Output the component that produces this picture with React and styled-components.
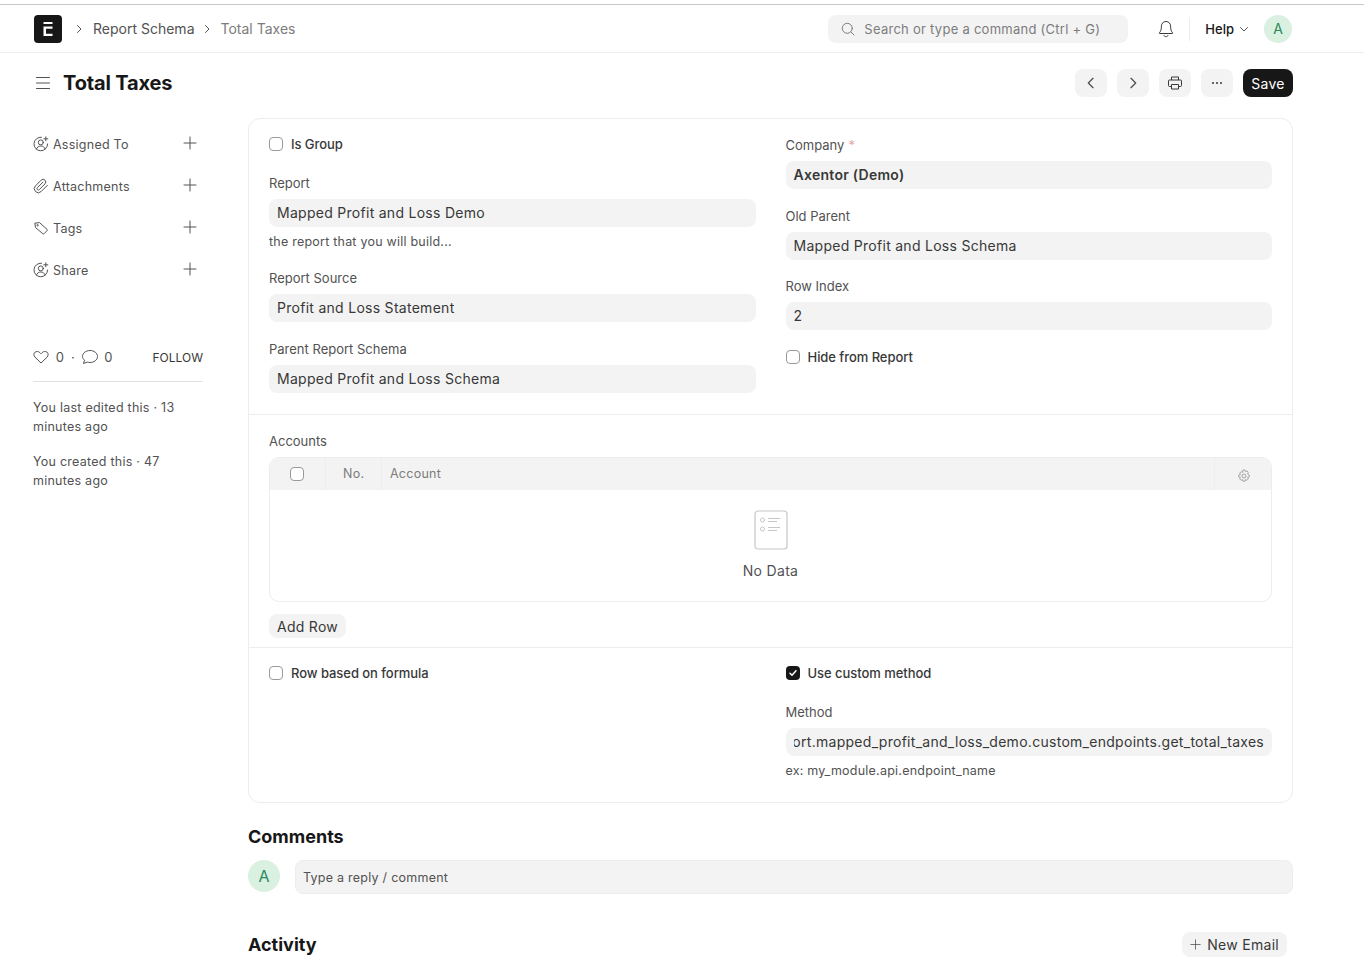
import React from "react";
import styled, { createGlobalStyle } from "styled-components";

const GlobalStyle = createGlobalStyle`
  html, body {
    margin: 0;
    padding: 0;
    background: #fff;
    font-family: Inter, "Liberation Sans", sans-serif;
    color: #383838;
    letter-spacing: 0.02em;
  }
  * { box-sizing: border-box; }
`;

const Navbar = styled.header`
  margin-top: 4px;
  height: 49px;
  border-top: 1px solid #c8c8c8;
  border-bottom: 1px solid #ededed;
  display: flex;
  align-items: center;
  padding: 0 72px 0 34px;
`;

const Logo = styled.div`
  width: 28px;
  height: 28px;
  border-radius: 4px;
  background: #171717;
  display: flex;
  align-items: center;
  justify-content: center;
`;

const Crumbs = styled.nav`
  display: flex;
  align-items: center;
  margin-left: 11px;
  font-size: 14px;
  letter-spacing: 0;
  flex: 1;
`;

const Crumb = styled.span`
  color: ${(p) => (p.$current ? "#7c7c7c" : "#525252")};
  margin: 0 6px 0 8px;
`;

const SearchBox = styled.div`
  width: 300px;
  height: 28px;
  border-radius: 8px;
  background: #f3f3f3;
  display: flex;
  align-items: center;
  gap: 9px;
  padding-left: 13px;
  font-size: 13px;
  color: #7c7c7c;
  letter-spacing: 0.02em;
`;

const BellWrap = styled.div`
  margin-left: 30px;
  display: flex;
`;

const NavDivider = styled.div`
  width: 1px;
  height: 24px;
  background: #ededed;
  margin: 0 15px;
`;

const HelpLink = styled.div`
  display: flex;
  align-items: center;
  gap: 4px;
  font-size: 13px;
  font-weight: 500;
  color: #171717;
  letter-spacing: 0;
  margin-right: 14px;
`;

const Avatar = styled.div`
  width: ${(p) => p.$size}px;
  height: ${(p) => p.$size}px;
  border-radius: 50%;
  background: #daf0e1;
  color: #2b8a5c;
  display: flex;
  align-items: center;
  justify-content: center;
  font-size: ${(p) => (p.$size > 30 ? 16 : 14)}px;
  font-weight: 400;
  flex-shrink: 0;
  letter-spacing: 0;
`;

const PageHead = styled.div`
  height: 65px;
  display: flex;
  align-items: center;
  padding: 0 71px 5px 36px;
`;

const Title = styled.h1`
  margin: 0 0 0 13px;
  font-size: 20px;
  font-weight: 700;
  color: #171717;
  flex: 1;
  letter-spacing: -0.008em;
`;

const IconButton = styled.button`
  width: 32px;
  height: 28px;
  border: 0;
  padding: 0;
  border-radius: 8px;
  background: #f3f3f3;
  display: flex;
  align-items: center;
  justify-content: center;
  margin-left: ${(p) => p.$gap}px;
  color: #525252;
`;

const SaveButton = styled.button`
  height: 28px;
  width: 50px;
  border: 0;
  padding: 0;
  margin-left: 10px;
  border-radius: 8px;
  background: #171717;
  color: #fff;
  font-family: inherit;
  font-size: 14px;
  letter-spacing: 0.02em;
`;

const Layout = styled.div`
  display: flex;
  padding: 0 71px 0 33px;
`;

const Sidebar = styled.aside`
  width: 170px;
  margin-right: 45px;
  flex-shrink: 0;
  padding-top: 5px;
`;

const SideItem = styled.div`
  height: 42px;
  display: flex;
  align-items: center;
  font-size: 12.5px;
  color: #525252;
  letter-spacing: 0.02em;
`;

const SideLabel = styled.span`
  margin-left: 4px;
  flex: 1;
`;

const PlusWrap = styled.span`
  display: flex;
  margin-right: 6px;
  margin-top: -3px;
`;

const Stats = styled.div`
  margin-top: 54px;
  height: 37px;
  display: flex;
  align-items: center;
  border-bottom: 1px solid #e2e2e2;
  padding-bottom: 12px;
  font-size: 13px;
  color: #525252;
  gap: 6.7px;
`;

const Follow = styled.span`
  margin-left: auto;
  font-size: 12px;
  color: #383838;
  letter-spacing: 0;
`;

const Meta = styled.p`
  margin: 16px 0 0;
  font-size: 12.5px;
  line-height: 19px;
  color: #525252;
  width: 150px;
  letter-spacing: 0.02em;
`;

const Main = styled.main`
  flex: 1;
  min-width: 0;
`;

const FormCard = styled.div`
  border: 1px solid #ededed;
  border-radius: 12px;
`;

const Section = styled.section`
  padding: ${(p) => p.$padding};
  border-top: ${(p) => (p.$first ? "0" : "1px solid #ededed")};
`;

const Columns = styled.div`
  display: grid;
  grid-template-columns: minmax(0, 1fr) minmax(0, 1fr);
  column-gap: 30px;
`;

const Column = styled.div`
  min-width: 0;
  padding-top: ${(p) => p.$top || 0}px;
`;

const Check = styled.label`
  display: flex;
  align-items: center;
  gap: 8px;
  height: 20px;
  font-size: 13px;
  font-weight: 500;
  color: #383838;
  letter-spacing: -0.05px;
  margin-bottom: ${(p) => p.$mb || 0}px;
`;

const Box = styled.span`
  width: 14px;
  height: 14px;
  border-radius: 4px;
  border: ${(p) => (p.$checked ? "0" : "1px solid #999")};
  background: ${(p) => (p.$checked ? "#171717" : "#fff")};
  display: flex;
  align-items: center;
  justify-content: center;
  flex-shrink: 0;
  margin-right: ${(p) => p.$shift || 0}px;
`;

const Field = styled.div`
  margin-bottom: ${(p) => p.$mb ?? 19.7}px;
`;

const Label = styled.div`
  font-size: 13px;
  line-height: 15px;
  color: #525252;
  margin-bottom: 8px;
  letter-spacing: 0;
`;

const Req = styled.span`
  color: #e8a8a8;
  margin-left: 4px;
`;

const Control = styled.div`
  height: 28px;
  line-height: 28px;
  border-radius: 8px;
  background: #f3f3f3;
  padding: 0 8px;
  font-size: 14px;
  color: #383838;
  font-weight: ${(p) => (p.$bold ? 600 : 400)};
  letter-spacing: 0.02em;
  white-space: nowrap;
`;

const ScrolledValue = styled.div`
  overflow: hidden;
  display: flex;
  justify-content: flex-end;
`;

const Hint = styled.div`
  margin-top: 7px;
  font-size: 12.5px;
  line-height: 16px;
  color: #525252;
  letter-spacing: 0.018em;
`;

const Grid = styled.div`
  border: 1px solid #ededed;
  border-radius: 10px;
  overflow: hidden;
`;

const GridHead = styled.div`
  height: 32px;
  background: #f3f3f3;
  display: flex;
  font-size: 12.5px;
  letter-spacing: 0.02em;
  color: #7c7c7c;
`;

const HeadCell = styled.div`
  width: ${(p) => p.$width}px;
  flex: ${(p) => (p.$grow ? 1 : "none")};
  display: flex;
  align-items: center;
  justify-content: ${(p) => (p.$center ? "center" : "flex-start")};
  padding-left: ${(p) => p.$pad || 0}px;
  padding-bottom: ${(p) => (p.$last ? 0 : 1)}px;
  border-right: ${(p) => (p.$last ? "0" : "1px solid #ededed")};
`;

const GearIcon = styled.svg`
  margin-top: 3px;
`;

const GridEmpty = styled.div`
  height: 111px;
  display: flex;
  flex-direction: column;
  align-items: center;
  padding-top: 20px;
  font-size: 14px;
  color: #525252;
  gap: 12px;
`;

const GridActions = styled.div`
  margin-top: 12px;
  display: flex;
`;

const SmallButton = styled.button`
  height: ${(p) => p.$height || 24}px;
  padding: 0 8px;
  border: 0;
  border-radius: 8px;
  background: #f3f3f3;
  font-family: inherit;
  font-size: 14px;
  letter-spacing: 0.02em;
  color: #383838;
  display: flex;
  align-items: center;
  gap: 6px;
`;

const Heading = styled.h2`
  margin: 0;
  font-size: 18px;
  line-height: 22px;
  font-weight: 700;
  color: #171717;
  letter-spacing: 0;
`;

const Comments = styled.div`
  margin-top: 23px;
`;

const CommentRow = styled.div`
  display: flex;
  gap: 15px;
  margin-top: 12px;
`;

const CommentInput = styled.div`
  flex: 1;
  height: 34px;
  border: 1px solid #ededed;
  border-radius: 8px;
  background: #f3f3f3;
  font-size: 12.5px;
  letter-spacing: 0.02em;
  color: #525252;
  padding-left: 7px;
  display: flex;
  align-items: center;
`;

const ActivityHead = styled.div`
  display: flex;
  align-items: center;
  justify-content: space-between;
  margin-top: 38px;
  padding-right: 6px;
  padding-bottom: 11px;
`;

const Chevron = ({ dir = "right", size = 12, color = "#525252" }) => (
  <svg width={size} height={size} viewBox="0 0 12 12" fill="none" stroke={color} strokeLinecap="round" strokeLinejoin="round">
    {dir === "right" && <path d="M4.5 2.5 8 6l-3.5 3.5" />}
    {dir === "left" && <path d="M7.5 2.5 4 6l3.5 3.5" />}
    {dir === "down" && <path d="M2.5 4.5 6 8l3.5-3.5" />}
  </svg>
);

const Plus = ({ size = 14, color = "#525252" }) => (
  <svg width={size} height={size} viewBox="0 0 14 14" fill="none" stroke={color} strokeLinecap="round">
    <path d="M7 1v12M1 7h12" />
  </svg>
);

const UserPlus = () => (
  <svg width="16" height="16" viewBox="0 0 16 16" fill="none" stroke="#525252" strokeLinecap="round">
    <path d="M14.6 8A6.8 6.8 0 1 1 8.5 1.2" />
    <circle cx="7.8" cy="6.4" r="2.5" />
    <path d="M3.4 13c.7-1.900 2.400-3 4.400-3s3.700 1.100 4.400 3" />
    <path d="M12.8.8v4M10.800 2.800h4" />
  </svg>
);

const Clip = () => (
  <svg width="16" height="16" viewBox="0 0 24 24" fill="none" stroke="#525252" strokeWidth="1.5" strokeLinecap="round" strokeLinejoin="round">
    <path d="m21.44 11.05-9.19 9.19a6 6 0 0 1-8.49-8.49l8.57-8.57A4 4 0 1 1 18 8.84l-8.59 8.57a2 2 0 0 1-2.83-2.83l8.49-8.48" />
  </svg>
);

const TagIcon = () => (
  <svg width="16" height="16" viewBox="0 0 16 16" fill="none" stroke="#525252" strokeLinejoin="round">
    <path d="M1.800 3.200 6.500 2.600l7.700 6.900c.3.300.3.700 0 1l-3.300 3.300c-.3.300-.7.300-1 0L2.500 7.500z" />
    <circle cx="4.600" cy="5.300" r=".7" />
  </svg>
);

const App = () => (
  <>
    <GlobalStyle />
    <Navbar>
      <Logo>
        <svg width="10" height="14" viewBox="0 0 10 14" fill="#fff">
          <path d="M.500 0h9v2h-9zM.500 4.500h9v2.200H3v5h6.500V14h-9z" />
        </svg>
      </Logo>
      <Crumbs>
        <Chevron />
        <Crumb>Report Schema</Crumb>
        <Chevron />
        <Crumb $current>Total Taxes</Crumb>
      </Crumbs>
      <SearchBox>
        <svg width="14" height="14" viewBox="0 0 14 14" fill="none" stroke="#7c7c7c" strokeLinecap="round">
          <circle cx="6.300" cy="6.300" r="5" />
          <path d="m10 10 3 3" />
        </svg>
        Search or type a command (Ctrl + G)
      </SearchBox>
      <BellWrap>
        <svg width="16" height="18" viewBox="0 0 16 18" fill="none" stroke="#383838" strokeLinejoin="round">
          <path d="M8 1.500c-2.900 0-4.600 2.200-4.600 4.800 0 3.200-.6 5-2 6.500-.3.300-.1.700.3.700h12.600c.4 0 .6-.4.300-.7-1.400-1.500-2-3.300-2-6.500 0-2.600-1.700-4.800-4.600-4.800Z" />
          <path d="M6 15.500c.4.800 1.100 1.200 2 1.200s1.600-.4 2-1.200" strokeLinecap="round" />
        </svg>
      </BellWrap>
      <NavDivider />
      <HelpLink>
        Help
        <Chevron dir="down" />
      </HelpLink>
      <Avatar $size={28}>A</Avatar>
    </Navbar>

    <PageHead>
      <svg width="14" height="14" viewBox="0 0 14 14" fill="none" stroke="#525252" strokeLinecap="round">
        <path d="M.5 1.500h13M.5 7h13M.5 12.500h13" />
      </svg>
      <Title>Total Taxes</Title>
      <IconButton $gap={0}><Chevron dir="left" size={16} /></IconButton>
      <IconButton $gap={10}><Chevron size={16} /></IconButton>
      <IconButton $gap={10}>
        <svg width="16" height="16" viewBox="0 0 16 16" fill="none" stroke="#383838" strokeLinejoin="round">
          <path d="M4.500 5V2h7v3M4.500 11.500h-2a1 1 0 0 1-1-1V6a1 1 0 0 1 1-1h11a1 1 0 0 1 1 1v4.500a1 1 0 0 1-1 1h-2" />
          <path d="M4.500 9.500h7V14h-7z" />
        </svg>
      </IconButton>
      <IconButton $gap={10}>
        <svg width="16" height="16" viewBox="0 0 16 16" fill="#383838">
          <circle cx="4" cy="8" r="1" />
          <circle cx="8" cy="8" r="1" />
          <circle cx="12" cy="8" r="1" />
        </svg>
      </IconButton>
      <SaveButton>Save</SaveButton>
    </PageHead>

    <Layout>
      <Sidebar>
        <SideItem><UserPlus /><SideLabel>Assigned To</SideLabel><PlusWrap><Plus /></PlusWrap></SideItem>
        <SideItem><Clip /><SideLabel>Attachments</SideLabel><PlusWrap><Plus /></PlusWrap></SideItem>
        <SideItem><TagIcon /><SideLabel>Tags</SideLabel><PlusWrap><Plus /></PlusWrap></SideItem>
        <SideItem><UserPlus /><SideLabel>Share</SideLabel><PlusWrap><Plus /></PlusWrap></SideItem>
        <Stats>
          <svg width="16" height="16" viewBox="0 0 16 16" fill="none" stroke="#525252" strokeLinejoin="round">
            <path d="M8 14 2 8.200C.4 6.500.6 4.300 2 3.200c1.500-1.100 3.600-.9 4.800.4L8 4.800l1.200-1.200c1.200-1.300 3.300-1.500 4.800-.4 1.400 1.100 1.600 3.300 0 5z" />
          </svg>
          <span>0</span>
          <span>·</span>
          <svg width="16" height="16" viewBox="0 0 16 16" fill="none" stroke="#525252" strokeLinejoin="round">
            <path d="M8 1.500c4 0 7.500 2.600 7.500 6s-3.500 6-7.500 6c-.9 0-1.800-.2-2.600-.4L1.500 14.500l1-3.300C1.200 10 .5 8.800.5 7.500c0-3.400 3.500-6 7.500-6Z" />
          </svg>
          <span>0</span>
          <Follow>FOLLOW</Follow>
        </Stats>
        <Meta>You last edited this · 13 minutes ago</Meta>
        <Meta>You created this · 47 minutes ago</Meta>
      </Sidebar>

      <Main>
        <FormCard>
          <Section $first $padding="15px 20px 0">
            <Columns>
              <Column>
                <Check $mb={22}><Box />Is Group</Check>
                <Field $mb={21}>
                  <Label>Report</Label>
                  <Control>Mapped Profit and Loss Demo</Control>
                  <Hint>the report that you will build...</Hint>
                </Field>
                <Field $mb={20}>
                  <Label>Report Source</Label>
                  <Control>Profit and Loss Statement</Control>
                </Field>
                <Field $mb={21}>
                  <Label>Parent Report Schema</Label>
                  <Control>Mapped Profit and Loss Schema</Control>
                </Field>
              </Column>
              <Column $top={4}>
                <Field>
                  <Label>Company<Req>*</Req></Label>
                  <Control $bold>Axentor (Demo)</Control>
                </Field>
                <Field>
                  <Label>Old Parent</Label>
                  <Control>Mapped Profit and Loss Schema</Control>
                </Field>
                <Field $mb={17}>
                  <Label>Row Index</Label>
                  <Control>2</Control>
                </Field>
                <Check><Box />Hide from Report</Check>
              </Column>
            </Columns>
          </Section>

          <Section $padding="19px 20px 9px">
            <Label>Accounts</Label>
            <Grid>
              <GridHead>
                <HeadCell $width={56} $center>
                  <Box $shift={2} />
                </HeadCell>
                <HeadCell $width={56} $pad={17}>No.</HeadCell>
                <HeadCell $grow $pad={8}>Account</HeadCell>
                <HeadCell $width={56} $center $last $pad={2}>
                  <GearIcon width="14" height="14" viewBox="0 0 14 14" fill="none" stroke="#a3a3a3">
                    <circle cx="7" cy="7" r="2" />
                    <path d="M6 1h2l.4 1.600 1.500-.7 1.400 1.400-.7 1.500L12.200 6v2l-1.600.4.700 1.500-1.400 1.400-1.500-.7L8 12.200H6l-.4-1.600-1.500.7-1.400-1.400.7-1.500L1.800 8V6l1.600-.4-.7-1.500 1.400-1.400 1.500.7z" strokeLinejoin="round" />
                  </GearIcon>
                </HeadCell>
              </GridHead>
              <GridEmpty>
                <svg width="34" height="40" viewBox="0 0 34 40" fill="none" stroke="#c7c7c7">
                  <rect x="1" y="1" width="32" height="38" rx="3" strokeWidth="1.200" />
                  <circle cx="8.500" cy="10" r="2" />
                  <circle cx="8.500" cy="19" r="2" />
                  <path d="M14 8.500h12M14 11.500h9M14 17.500h12M14 20.500h9" />
                </svg>
                No Data
              </GridEmpty>
            </Grid>
            <GridActions>
              <SmallButton>Add Row</SmallButton>
            </GridActions>
          </Section>

          <Section $padding="15px 20px 23px">
            <Columns>
              <Column>
                <Check><Box />Row based on formula</Check>
              </Column>
              <Column>
                <Check $mb={22}>
                  <Box $checked>
                    <svg width="10" height="10" viewBox="0 0 10 10" fill="none" stroke="#fff" strokeWidth="1.500" strokeLinecap="round" strokeLinejoin="round">
                      <path d="m2 5.200 2 2 4-4.400" />
                    </svg>
                  </Box>
                  Use custom method
                </Check>
                <Field $mb={0}>
                  <Label>Method</Label>
                  <Control>
                    <ScrolledValue>
                      <span>erpnext_demo.report.mapped_profit_and_loss_demo.custom_endpoints.get_total_taxes</span>
                    </ScrolledValue>
                  </Control>
                  <Hint>ex: my_module.api.endpoint_name</Hint>
                </Field>
              </Column>
            </Columns>
          </Section>
        </FormCard>

        <Comments>
          <Heading>Comments</Heading>
          <CommentRow>
            <Avatar $size={32}>A</Avatar>
            <CommentInput>Type a reply / comment</CommentInput>
          </CommentRow>
        </Comments>

        <ActivityHead>
          <Heading>Activity</Heading>
          <SmallButton $height={25}><Plus size={11} />New Email</SmallButton>
        </ActivityHead>
      </Main>
    </Layout>
  </>
);

export default App;
